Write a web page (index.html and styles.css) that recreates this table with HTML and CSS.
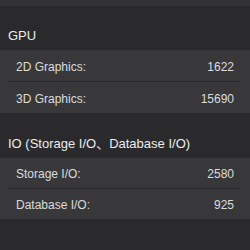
FILE: index.html
```html
<!DOCTYPE html>
<html>
<head>
<meta charset="utf-8">
<link rel="stylesheet" href="styles.css">
</head>
<body>
<div class="strip"></div>
<section class="group">
  <div class="group-title">GPU</div>
  <div class="rows">
    <div class="row"><span class="label">2D Graphics:</span><span class="value">1622</span></div>
    <div class="sep"></div>
    <div class="row"><span class="label">3D Graphics:</span><span class="value">15690</span></div>
  </div>
</section>
<section class="group">
  <div class="group-title second">IO (Storage I/O、Database I/O)</div>
  <div class="rows compact">
    <div class="row"><span class="label">Storage I/O:</span><span class="value">2580</span></div>
    <div class="sep"></div>
    <div class="row"><span class="label">Database I/O:</span><span class="value">925</span></div>
  </div>
</section>
</body>
</html>
```
FILE: styles.css
```css
html, body {
  margin: 0;
  padding: 0;
  background: #2a2a2c;
  width: 250px;
  height: 250px;
  overflow: hidden;
  font-family: "Liberation Sans", Arial, "Noto Sans CJK SC", sans-serif;
}
.strip {
  height: 6px;
  background: #333336;
}
.group-title {
  height: 44px;
  box-sizing: border-box;
  padding: 22px 8px 0 8px;
  font-size: 13px;
  line-height: 15px;
  color: #ececec;
  white-space: nowrap;
}
.group-title.second {
  height: 45px;
  padding-top: 23px;
}
.rows {
  background: #38383b;
}
.row {
  height: 31px;
  box-sizing: border-box;
  padding: 10px 16px 0 16px;
  display: flex;
  justify-content: space-between;
  font-size: 12px;
  line-height: 14px;
  color: #dcdcdc;
}
.compact .row {
  height: 30px;
  padding-top: 9px;
}
.sep {
  height: 1px;
  margin: 0 9px 0 8px;
  background: #29292b;
}
```
